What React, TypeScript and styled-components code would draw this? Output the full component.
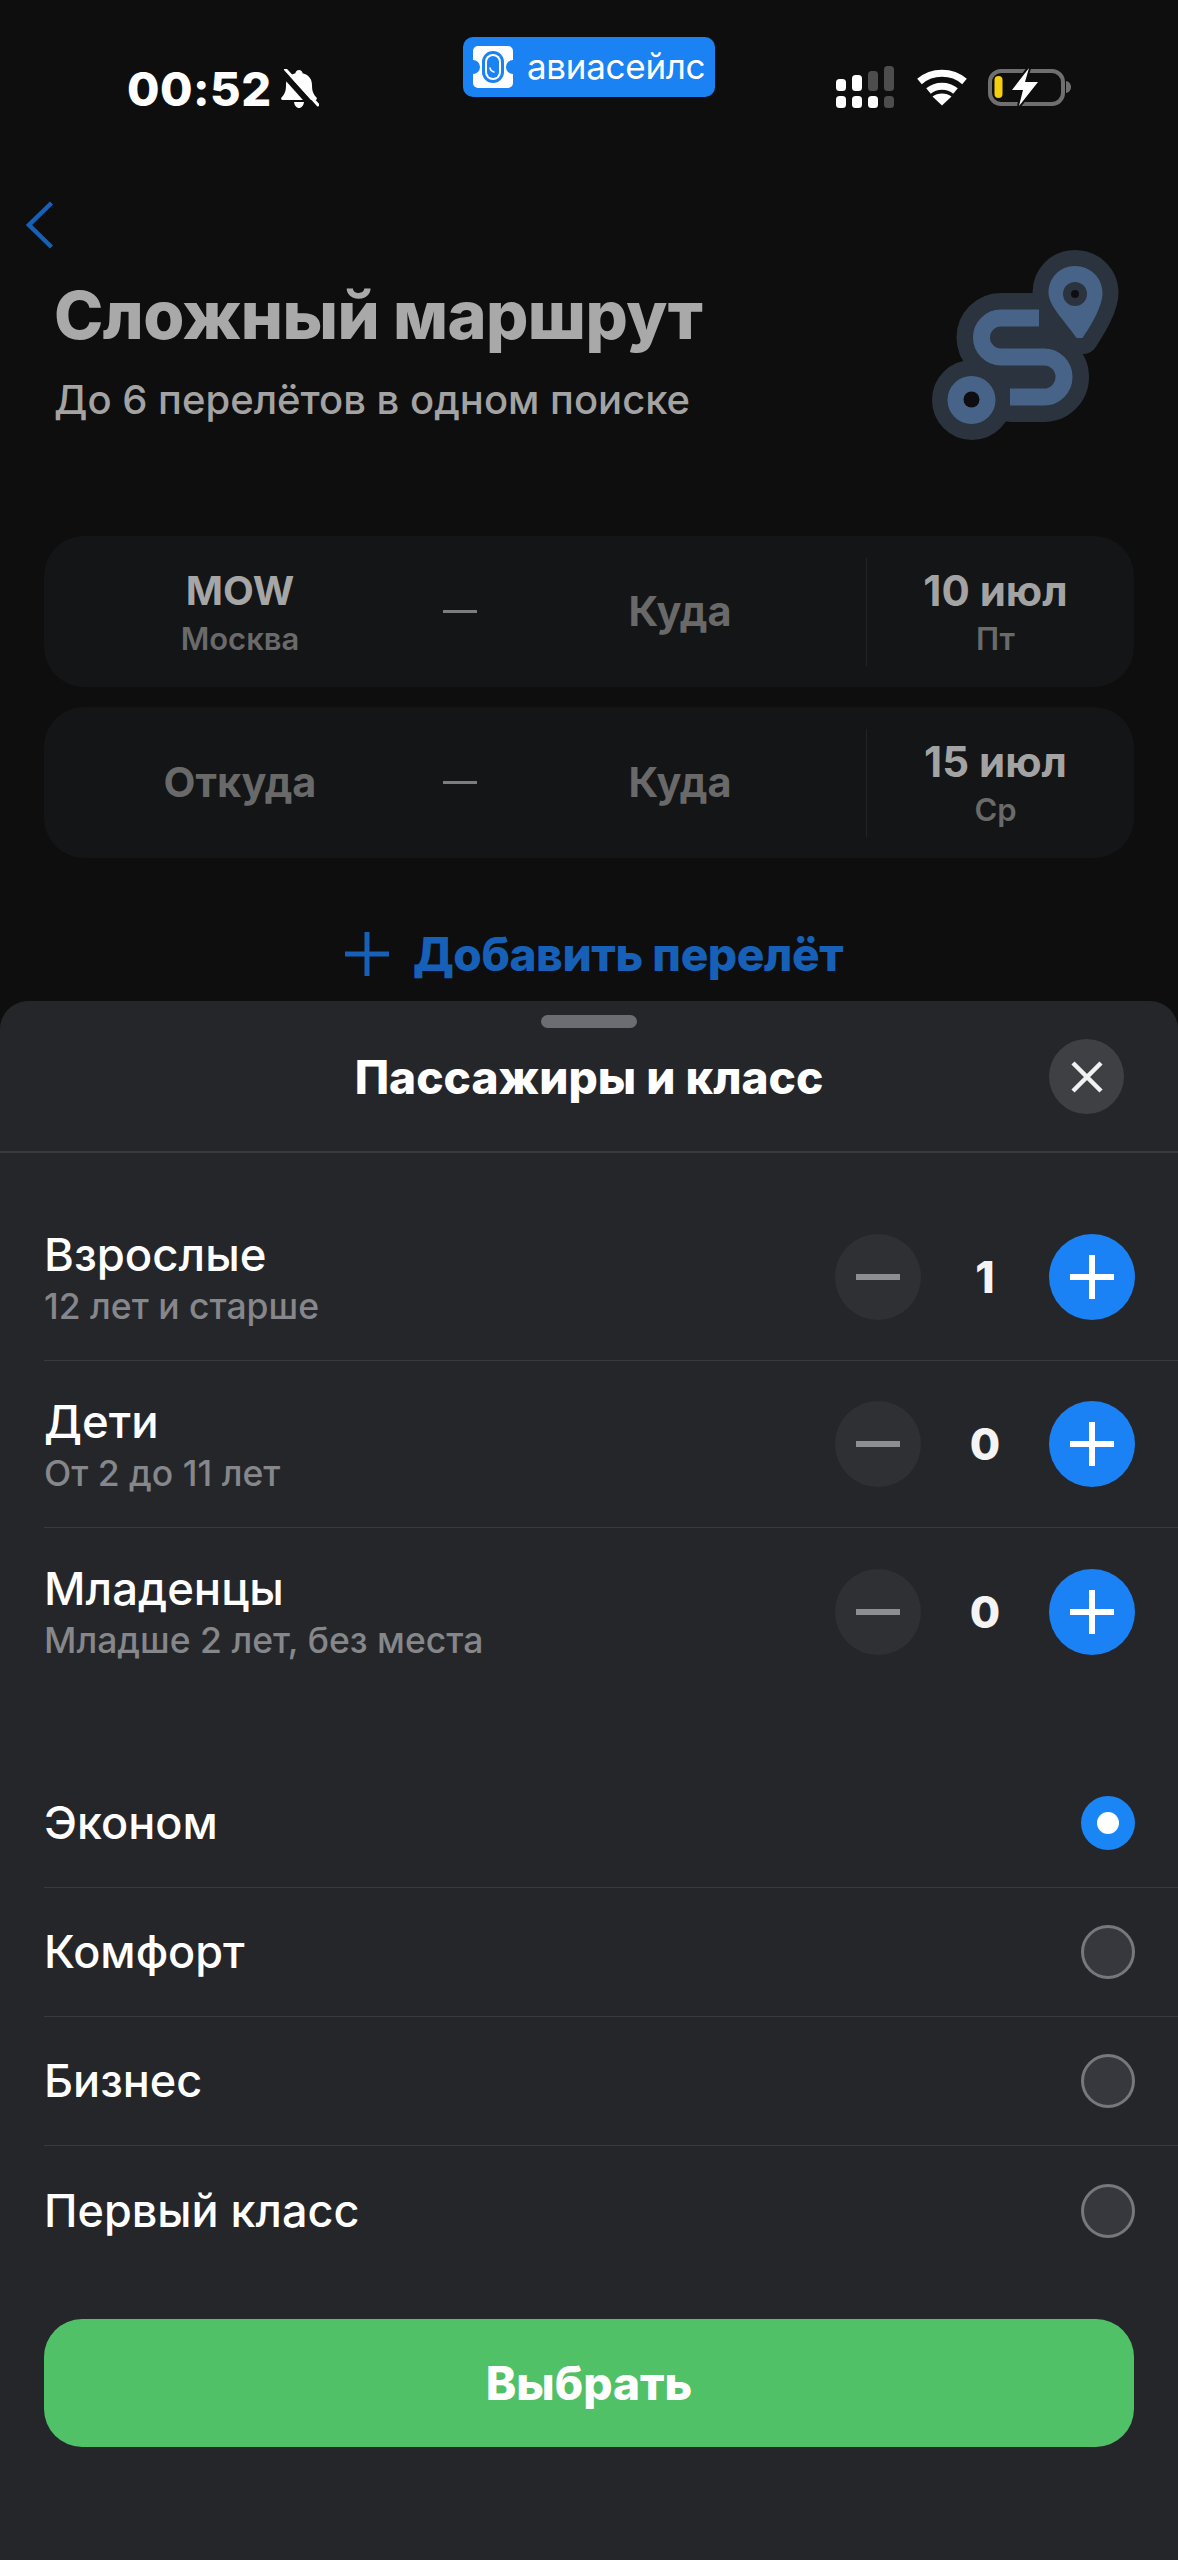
import React from 'react';
import styled, { createGlobalStyle } from 'styled-components';

const GlobalStyle = createGlobalStyle`
  html, body {
    margin: 0;
    padding: 0;
    background: #0e0e0f;
  }
  * {
    box-sizing: border-box;
  }
`;

const Page = styled.div`
  width: 1178px;
  height: 2560px;
  display: flex;
  flex-direction: column;
  overflow: hidden;
  background: #0e0e0f;
  font-family: Inter, "Liberation Sans", sans-serif;
  color: #fff;
`;

const Backdrop = styled.div`
  height: 1001px;
  flex-shrink: 0;
  display: flex;
  flex-direction: column;
`;

const StatusBar = styled.div`
  height: 201px;
  flex-shrink: 0;
  display: grid;
  grid-template-columns: 463px 252px 1fr;
  align-items: start;
  padding-top: 37px;
`;

const StatusLeft = styled.div`
  display: flex;
  align-items: center;
  gap: 7px;
  padding: 29px 0 0 127px;
`;

const Clock = styled.span`
  font-size: 47px;
  line-height: 46px;
  font-weight: 800;
  letter-spacing: 0.5px;
`;

const AppBadge = styled.div`
  height: 60px;
  border-radius: 10px;
  background: #1a82f2;
  display: flex;
  align-items: center;
  gap: 13px;
  padding: 0 0 0 9px;
`;

const BadgeName = styled.span`
  font-size: 35px;
  line-height: 40px;
  font-weight: 400;
  letter-spacing: -0.3px;
  color: #fff;
  padding-bottom: 2px;
`;

const StatusRight = styled.div`
  display: flex;
  align-items: center;
  gap: 20px;
  padding: 29px 0 0 121px;
`;

const BackButton = styled.div`
  height: 48px;
  padding-left: 26px;
  flex-shrink: 0;
`;

const Hero = styled.div`
  display: flex;
  justify-content: space-between;
  align-items: flex-start;
  padding: 0 58px 0 54px;
`;

const HeroText = styled.div`
  padding-top: 28px;
`;

const HeroTitle = styled.h1`
  margin: 0;
  font-size: 66.5px;
  line-height: 76px;
  font-weight: 800;
  letter-spacing: -0.6px;
  color: #a9a9a9;
`;

const HeroSubtitle = styled.p`
  margin: 23px 0 0;
  font-size: 40px;
  line-height: 48px;
  font-weight: 500;
  color: #a3a3a3;
`;

const Segments = styled.div`
  display: flex;
  flex-direction: column;
  gap: 20px;
  padding: 95px 44px 0;
`;

const SegmentCard = styled.div`
  height: 151px;
  border-radius: 40px;
  background: #141517;
  display: flex;
  align-items: center;
`;

const Route = styled.div`
  width: 822px;
  padding-left: 11px;
  display: grid;
  grid-template-columns: 370px 34px 370px;
  column-gap: 18px;
  align-items: center;
`;

const Place = styled.div`
  display: flex;
  flex-direction: column;
  align-items: center;
  gap: 6px;
`;

const PlaceCode = styled.span`
  font-size: 40px;
  line-height: 48px;
  font-weight: 700;
  color: #a6a6a6;
`;

const PlaceHint = styled.span`
  font-size: 31px;
  line-height: 36px;
  font-weight: 600;
  color: #6a6a6a;
`;

const PlaceEmpty = styled.span`
  margin-top: -2px;
  font-size: 41.5px;
  line-height: 48px;
  font-weight: 700;
  color: #696969;
`;

const Dash = styled.div`
  height: 3px;
  background: #7d7d7d;
`;

const CardDivider = styled.div`
  width: 1px;
  height: 108px;
  background: #232427;
`;

const DateCol = styled.div`
  flex: 1;
  padding-right: 10px;
  display: flex;
  flex-direction: column;
  align-items: center;
  gap: 6px;
`;

const DateValue = styled.span`
  font-size: 42px;
  line-height: 48px;
  font-weight: 700;
  color: #a3a3a3;
`;

const AddFlight = styled.div`
  display: flex;
  justify-content: center;
  align-items: center;
  gap: 24px;
  padding: 74px 0 0 10px;
`;

const AddLabel = styled.span`
  font-size: 46px;
  line-height: 44px;
  font-weight: 800;
  letter-spacing: -0.4px;
  color: #1660b8;
`;

const Sheet = styled.div`
  flex: 1;
  border-radius: 28px 28px 0 0;
  background: #25262a;
  display: flex;
  flex-direction: column;
`;

const Handle = styled.div`
  width: 96px;
  height: 13px;
  margin: 14px auto 0;
  border-radius: 7px;
  background: #6c6d73;
`;

const SheetHeader = styled.div`
  display: grid;
  grid-template-columns: 1fr auto 1fr;
  align-items: center;
  padding: 11px 54px 37px;
  border-bottom: 2px solid #3a3b3f;
`;

const SheetTitle = styled.h2`
  grid-column: 2;
  margin: 0;
  font-size: 46px;
  line-height: 56px;
  font-weight: 800;
  color: #fff;
`;

const CloseButton = styled.div`
  grid-column: 3;
  justify-self: end;
  width: 75px;
  height: 75px;
  border-radius: 50%;
  background: #3f4044;
  display: flex;
  align-items: center;
  justify-content: center;
`;

const Passengers = styled.div`
  padding: 41px 0 0 44px;
`;

const PassengerRow = styled.div<{ $divider: boolean }>`
  height: 167px;
  padding-right: 43px;
  display: flex;
  align-items: center;
  justify-content: space-between;
  border-bottom: ${(p) => (p.$divider ? '1.5px solid #3a3b3f' : 'none')};
`;

const PassengerText = styled.div`
  display: flex;
  flex-direction: column;
  gap: 3px;
`;

const RowLabel = styled.span`
  font-size: 45.5px;
  line-height: 56px;
  font-weight: 500;
  color: #fff;
`;

const ClassLabel = styled.span`
  font-size: 45px;
  line-height: 56px;
  font-weight: 500;
  color: #fff;
`;

const RowHint = styled.span`
  font-size: 35.5px;
  line-height: 42px;
  font-weight: 500;
  color: #86878b;
`;

const Stepper = styled.div`
  display: grid;
  grid-template-columns: 86px 128px 86px;
  align-items: center;
`;

const StepButton = styled.div<{ $active: boolean }>`
  width: 86px;
  height: 86px;
  border-radius: 50%;
  background: ${(p) => (p.$active ? '#1a82f5' : '#2f3034')};
  display: flex;
  align-items: center;
  justify-content: center;
`;

const StepValue = styled.span`
  text-align: center;
  font-size: 44px;
  line-height: 56px;
  font-weight: 800;
  color: #f4f4f4;
`;

const Classes = styled.div`
  padding: 64px 0 0 44px;
`;

const ClassRow = styled.div<{ $divider: boolean }>`
  height: 129px;
  padding-right: 43px;
  display: flex;
  align-items: center;
  justify-content: space-between;
  border-bottom: ${(p) => (p.$divider ? '1.5px solid #3a3b3f' : 'none')};
`;

const Radio = styled.div<{ $checked: boolean }>`
  width: 54px;
  height: 54px;
  border-radius: 50%;
  display: flex;
  align-items: center;
  justify-content: center;
  background: ${(p) => (p.$checked ? '#1a85f5' : '#37383d')};
  border: ${(p) => (p.$checked ? 'none' : '3px solid #77787b')};
`;

const RadioDot = styled.div`
  width: 22px;
  height: 22px;
  border-radius: 50%;
  background: #fff;
`;

const SelectButton = styled.div`
  height: 128px;
  margin: 44px 44px 0;
  border-radius: 38px;
  background: #50c167;
  display: flex;
  align-items: center;
  justify-content: center;
  font-size: 46px;
  font-weight: 800;
  color: #fff;
`;

const BellOffIcon = () => (
  <svg width="40" height="40" viewBox="0 0 40 40">
    <path
      d="M20 1c2 0 3.400 1.400 3.600 3.200C29.500 5.600 33 10 33 16c0 6 1.200 9 4.500 12.500.8 1 .2 2.500-1.200 2.500H3.700C2.300 31 1.700 29.500 2.500 28.500 5.800 25 7 22 7 16 7 10 10.500 5.600 16.400 4.200 16.600 2.400 18 1 20 1Z"
      fill="#fff"
    />
    <path d="M15 33h10c-.5 3.500-2.500 6-5 6s-4.500-2.500-5-6Z" fill="#fff" />
    <path d="M2.500 2.500L36 40" stroke="#0e0e0f" strokeWidth="6" />
    <path d="M6.500 0.500L39 36" stroke="#fff" strokeWidth="3" strokeLinecap="round" />
  </svg>
);

const TicketIcon = () => (
  <svg width="42" height="42" viewBox="0 0 42 42">
    <path
      d="M6 0h30a5 5 0 0 1 5 5v9a7 7 0 0 0 0 14v9a5 5 0 0 1-5 5H6a5 5 0 0 1-5-5v-9a7 7 0 0 0 0-14V5a5 5 0 0 1 5-5Z"
      fill="#fff"
    />
    <rect x="10" y="5" width="22" height="32" rx="11" fill="#1a82f2" />
    <rect x="13" y="8" width="16" height="26" rx="8" fill="#fff" />
    <rect x="15" y="10" width="12" height="22" rx="6" fill="#1a82f2" />
    <path d="M18 22c.3 2 1.500 3.500 4 4" stroke="#fff" strokeWidth="1.500" fill="none" strokeLinecap="round" />
  </svg>
);

const SignalIcon = () => (
  <svg width="60" height="42" viewBox="0 0 60 42">
    <rect x="0" y="13" width="10" height="12" rx="3.500" fill="#fff" />
    <rect x="16" y="9" width="10" height="16" rx="3.500" fill="#fff" />
    <rect x="32" y="5" width="10" height="20" rx="3.500" fill="#4d4d4d" />
    <rect x="48" y="0" width="10" height="25" rx="3.500" fill="#4d4d4d" />
    <rect x="0" y="30" width="10" height="12" rx="3.500" fill="#fff" />
    <rect x="16" y="30" width="10" height="12" rx="3.500" fill="#fff" />
    <rect x="32" y="30" width="10" height="12" rx="3.500" fill="#fff" />
    <rect x="48" y="30" width="10" height="12" rx="3.500" fill="#4d4d4d" />
  </svg>
);

const WifiIcon = () => (
  <svg width="52" height="38" viewBox="0 0 52 38">
    <path d="M3.500 13.500C16 2.500 36 2.500 48.500 13.500" stroke="#fff" strokeWidth="7" fill="none" />
    <path d="M12.500 23C20 16.500 32 16.500 39.500 23" stroke="#fff" strokeWidth="7" fill="none" />
    <path d="M26 37.500L16.500 28.500C21.500 24.500 30.500 24.500 35.500 28.500Z" fill="#fff" />
  </svg>
);

const BatteryIcon = () => (
  <svg width="83" height="38" viewBox="0 0 83 38">
    <rect x="2" y="3" width="73" height="33" rx="11" stroke="#6f6f6f" strokeWidth="4" fill="none" />
    <path d="M78 13c3 .5 5 3 5 6s-2 5.500-5 6Z" fill="#6f6f6f" />
    <rect x="6.500" y="8" width="8" height="22" rx="4" fill="#f5cf0f" />
    <path d="M41 0L24 22h11l-4 16 19-24H37Z" fill="#fff" stroke="#0e0e0f" strokeWidth="4" paintOrder="stroke" />
  </svg>
);

const BackIcon = () => (
  <svg width="28" height="48" viewBox="0 0 28 48">
    <path d="M25.500 2L3 24l22.500 22" stroke="#1660b8" strokeWidth="4.500" fill="none" />
  </svg>
);

const RouteArt = () => (
  <svg width="188" height="192" viewBox="33 18 188 192">
    <g stroke="#2b333e" fill="#2b333e" strokeLinejoin="round" strokeLinecap="round">
      <path
        d="M138 87H102a19.500 19.500 0 0 0 0 39h43a20 20 0 0 1 0 40H112"
        strokeWidth="50"
        fill="none"
      />
      <circle cx="73" cy="169" r="24" strokeWidth="32" />
      <path d="M176 35c15 0 27.500 11.500 27.500 27 0 13-11 31-20 45h-13c-9-14-21-32-21-45 0-15.500 11.500-27 26.500-27Z" strokeWidth="32" />
    </g>
    <path
      d="M140 87H102a19.500 19.500 0 0 0 0 39h43a20 20 0 0 1 0 40H111"
      stroke="#476488"
      strokeWidth="17"
      fill="none"
    />
    <circle cx="72.500" cy="169" r="24" fill="#476488" />
    <circle cx="72.500" cy="168.500" r="8" fill="#0e0e12" />
    <path d="M176 35c15 0 27.500 11.500 27.500 27 0 13-11 32-20 45h-6c-9-14-28-32-28-45 0-15.500 11.500-27 26.500-27Z" fill="#476488" />
    <circle cx="176" cy="63" r="12" fill="#2b333e" />
    <circle cx="176" cy="63" r="4" fill="#0e0e12" />
  </svg>
);

const CrossIcon = () => (
  <svg width="32" height="32" viewBox="0 0 32 32">
    <path d="M2 2l28 28M30 2L2 30" stroke="#f2f2f2" strokeWidth="4.500" />
  </svg>
);

const MinusIcon = () => (
  <svg width="44" height="6" viewBox="0 0 44 6">
    <rect width="44" height="6" fill="#8d8e92" />
  </svg>
);

const PlusIcon = ({ size, thickness, color }: { size: number; thickness: number; color: string }) => (
  <svg width={size} height={size} viewBox={`0 0 ${size} ${size}`}>
    <rect x={(size - thickness) / 2} y="0" width={thickness} height={size} fill={color} />
    <rect x="0" y={(size - thickness) / 2} width={size} height={thickness} fill={color} />
  </svg>
);

const passengers = [
  { label: 'Взрослые', hint: '12 лет и старше', count: 1 },
  { label: 'Дети', hint: 'От 2 до 11 лет', count: 0 },
  { label: 'Младенцы', hint: 'Младше 2 лет, без места', count: 0 },
];

const cabinClasses = ['Эконом', 'Комфорт', 'Бизнес', 'Первый класс'];

const App: React.FC = () => {
  return (
    <Page>
      <GlobalStyle />
      <Backdrop>
        <StatusBar>
          <StatusLeft>
            <Clock>00:52</Clock>
            <BellOffIcon />
          </StatusLeft>
          <AppBadge>
            <TicketIcon />
            <BadgeName>авиасейлс</BadgeName>
          </AppBadge>
          <StatusRight>
            <SignalIcon />
            <WifiIcon />
            <BatteryIcon />
          </StatusRight>
        </StatusBar>
        <BackButton>
          <BackIcon />
        </BackButton>
        <Hero>
          <HeroText>
            <HeroTitle>Сложный маршрут</HeroTitle>
            <HeroSubtitle>До 6 перелётов в одном поиске</HeroSubtitle>
          </HeroText>
          <RouteArt />
        </Hero>
        <Segments>
          <SegmentCard>
            <Route>
              <Place>
                <PlaceCode>MOW</PlaceCode>
                <PlaceHint>Москва</PlaceHint>
              </Place>
              <Dash />
              <Place>
                <PlaceEmpty>Куда</PlaceEmpty>
              </Place>
            </Route>
            <CardDivider />
            <DateCol>
              <DateValue>10 июл</DateValue>
              <PlaceHint>Пт</PlaceHint>
            </DateCol>
          </SegmentCard>
          <SegmentCard>
            <Route>
              <Place>
                <PlaceEmpty>Откуда</PlaceEmpty>
              </Place>
              <Dash />
              <Place>
                <PlaceEmpty>Куда</PlaceEmpty>
              </Place>
            </Route>
            <CardDivider />
            <DateCol>
              <DateValue>15 июл</DateValue>
              <PlaceHint>Ср</PlaceHint>
            </DateCol>
          </SegmentCard>
        </Segments>
        <AddFlight>
          <PlusIcon size={44} thickness={5} color="#1660b8" />
          <AddLabel>Добавить перелёт</AddLabel>
        </AddFlight>
      </Backdrop>
      <Sheet>
        <Handle />
        <SheetHeader>
          <SheetTitle>Пассажиры и класс</SheetTitle>
          <CloseButton>
            <CrossIcon />
          </CloseButton>
        </SheetHeader>
        <Passengers>
          {passengers.map((row, index) => (
            <PassengerRow key={row.label} $divider={index < passengers.length - 1}>
              <PassengerText>
                <RowLabel>{row.label}</RowLabel>
                <RowHint>{row.hint}</RowHint>
              </PassengerText>
              <Stepper>
                <StepButton $active={false}>
                  <MinusIcon />
                </StepButton>
                <StepValue>{row.count}</StepValue>
                <StepButton $active>
                  <PlusIcon size={44} thickness={6} color="#fff" />
                </StepButton>
              </Stepper>
            </PassengerRow>
          ))}
        </Passengers>
        <Classes>
          {cabinClasses.map((name, index) => (
            <ClassRow key={name} $divider={index < cabinClasses.length - 1}>
              <ClassLabel>{name}</ClassLabel>
              <Radio $checked={index === 0}>{index === 0 && <RadioDot />}</Radio>
            </ClassRow>
          ))}
        </Classes>
        <SelectButton>Выбрать</SelectButton>
      </Sheet>
    </Page>
  );
};

export default App;
